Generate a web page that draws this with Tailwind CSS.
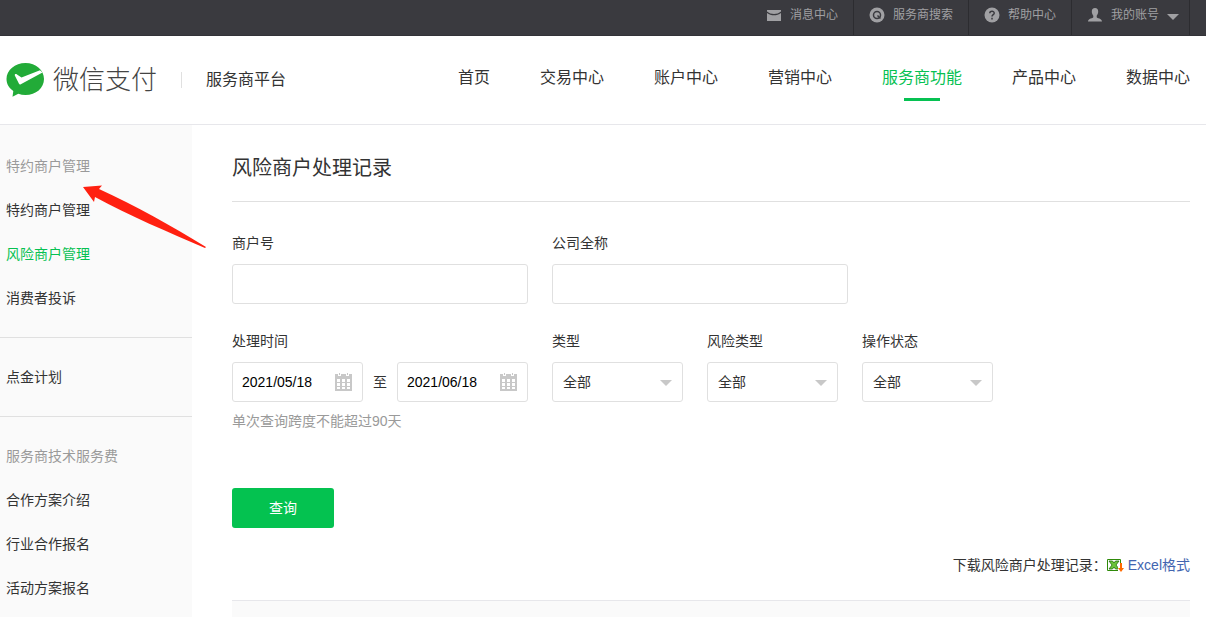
<!DOCTYPE html>
<html lang="zh-CN">
<head>
<meta charset="utf-8">
<title>微信支付服务商平台</title>
<script src="https://cdn.jsdelivr.net/npm/@tailwindcss/browser@4"></script>
</head>
<body class="flex min-h-screen flex-col bg-white font-['Liberation_Sans','Noto_Sans_CJK_SC',sans-serif] text-sm text-[#333]">
<div class="flex h-9 justify-end border-b border-[#333338] bg-[#3a3a3f] pr-4 text-xs text-[#a0a0a3]">
  <a href="#" class="flex items-center gap-2 border-r border-[#2c2c30] px-[15px] pb-1.5">
    <svg class="h-4 w-4" viewBox="0 0 16 16" fill="#a0a0a3"><path d="M1 3h14v1.500C13 6.200 10.500 7 8 7S3 6.200 1 4.500z"/><path d="M1 6c2 1.500 4.500 2.300 7 2.300S13 7.500 15 6v8H1z"/></svg>
    消息中心</a>
  <a href="#" class="flex items-center gap-2 border-r border-[#2c2c30] px-[15px] pb-1.5">
    <svg class="h-4 w-4" viewBox="0 0 16 16"><circle cx="8" cy="8" r="7.500" fill="#a0a0a3"/><circle cx="8" cy="8" r="3.500" fill="none" stroke="#3a3a3f" stroke-width="1.500"/><path d="M8.500 8.500l3 3" stroke="#3a3a3f" stroke-width="1.500"/></svg>
    服务商搜索</a>
  <a href="#" class="flex items-center gap-2 border-r border-[#2c2c30] px-[15px] pb-1.5">
    <svg class="h-4 w-4" viewBox="0 0 16 16"><circle cx="8" cy="8" r="7.500" fill="#a0a0a3"/><path d="M5.800 6.300C5.800 3.600 10.300 3.700 10.200 6.200 10.200 7.700 8 7.700 8 9.600M8 10.800v1.700" fill="none" stroke="#3a3a3f" stroke-width="1.500"/></svg>
    帮助中心</a>
  <a href="#" class="flex items-center gap-2 border-r border-[#2c2c30] pr-2.5 pl-[15px] pb-1.5">
    <svg class="h-4 w-4" viewBox="0 0 16 16" fill="#a0a0a3"><path d="M8 1c2.200 0 3.200 1.500 3.200 3.500S10.300 8 9.700 8.700v1.500c0 1 5.300 1 5.300 4.300H1c0-3.300 5.300-3.300 5.300-4.300V8.700C5.700 8 4.800 6.500 4.800 4.500S5.800 1 8 1z"/></svg>
    我的账号
    <svg class="mt-1 h-1.5 w-3" viewBox="0 0 12 6" fill="#a0a0a3"><path d="M0 0h12L6 6z"/></svg></a>
</div>

<header class="flex h-[89px] items-center justify-between border-b border-[#e7e7eb] pr-4 pl-1.5">
  <div class="flex items-center">
    <a href="#" class="flex items-center gap-2 font-['Noto_Sans_CJK_SC',sans-serif] text-[26px] font-light text-[#444]">
      <svg class="h-9 w-[39px]" viewBox="0 0 39 36"><path d="M19.500 1C30 1 38 8 38 17s-8 16-18.500 16c-2.600 0-5-.4-7.200-1.200L6.500 34.800 7.300 29C3 26 .5 22 .5 17 .5 8 9 1 19.500 1z" fill="#22ab38"/><path d="M8.800 13.500C8.500 12 10 11.800 11 12.500L15.500 15.500 34 8.300 36.500 10.500 14.800 22.300C14 22.700 13.300 22.500 13 21.800z" fill="#fff"/></svg>
      <span class="pb-1">微信支付</span></a>
    <span class="ml-6 h-4 w-px bg-[#e0e0e0]"></span>
    <span class="ml-6 text-base">服务商平台</span>
  </div>
  <nav class="flex gap-[50px] pb-1 text-base">
    <a href="#">首页</a>
    <a href="#">交易中心</a>
    <a href="#">账户中心</a>
    <a href="#">营销中心</a>
    <a href="#" class="relative text-[#06c152]">服务商功能<span class="absolute top-8 left-1/2 h-[3px] w-9 -translate-x-1/2 bg-[#06c152]"></span></a>
    <a href="#">产品中心</a>
    <a href="#">数据中心</a>
  </nav>
</header>

<div class="relative flex grow">
  <aside class="w-48 shrink-0 bg-[#fafafa] pt-[31px]">
    <h2 class="mb-6 pl-1.5 leading-5 text-[#9a9a9a]">特约商户管理</h2>
    <ul class="flex flex-col gap-6 pl-1.5 leading-5">
      <li><a href="#">特约商户管理</a></li>
      <li><a href="#" class="text-[#06c152]">风险商户管理</a></li>
      <li><a href="#">消费者投诉</a></li>
    </ul>
    <div class="my-[29px] border-y border-[#e0e0e0] py-[29px] pl-1.5 leading-5"><a href="#">点金计划</a></div>
    <h2 class="mb-6 pl-1.5 leading-5 text-[#9a9a9a]">服务商技术服务费</h2>
    <ul class="flex flex-col gap-6 pl-1.5 leading-5">
      <li><a href="#">合作方案介绍</a></li>
      <li><a href="#">行业合作报名</a></li>
      <li><a href="#">活动方案报名</a></li>
    </ul>
  </aside>

  <main class="flex grow flex-col pr-4 pl-10">
    <h1 class="border-b border-[#e0e0e0] pt-[29px] pb-[19px] text-xl">风险商户处理记录</h1>
    <form class="pt-[31px]">
      <div class="flex gap-6">
        <div class="flex w-[296px] flex-col gap-[11px]"><label for="mch" class="leading-5">商户号</label><input id="mch" type="text" class="h-10 rounded-[3px] border border-[#e0e0e0] px-2.5"></div>
        <div class="flex w-[296px] flex-col gap-[11px]"><label for="company" class="leading-5">公司全称</label><input id="company" type="text" class="h-10 rounded-[3px] border border-[#e0e0e0] px-2.5"></div>
      </div>
      <div class="flex gap-6 pt-[27px]">
        <div class="flex flex-col">
          <label for="from" class="mb-[11px] leading-5">处理时间</label>
          <div class="flex items-center gap-2.5">
            <div class="flex h-10 w-[131px] items-center justify-between rounded-[3px] border border-[#e0e0e0] pr-2.5 pl-[9px] text-black">
              <input id="from" type="text" value="2021/05/18" class="w-20">
              <svg class="h-[18px] w-[17px] shrink-0" viewBox="0 0 17 18"><path d="M0 1h3v2h3V1h5v2h3V1h3v17H0zM4 0h1v2H4zM12 0h1v2h-1z" fill="#c8c8c8"/><path d="M2 6h3v3H2zM7 6h3v3H7zM12 6h3v3h-3zM2 10h3v3H2zM7 10h3v3H7zM12 10h3v3h-3zM2 14h3v2H2zM7 14h3v2H7zM12 14h3v2h-3z" fill="#fff"/></svg>
            </div>
            <label for="to">至</label>
            <div class="flex h-10 w-[131px] items-center justify-between rounded-[3px] border border-[#e0e0e0] pr-2.5 pl-[9px] text-black">
              <input id="to" type="text" value="2021/06/18" class="w-20">
              <svg class="h-[18px] w-[17px] shrink-0" viewBox="0 0 17 18"><path d="M0 1h3v2h3V1h5v2h3V1h3v17H0zM4 0h1v2H4zM12 0h1v2h-1z" fill="#c8c8c8"/><path d="M2 6h3v3H2zM7 6h3v3H7zM12 6h3v3h-3zM2 10h3v3H2zM7 10h3v3H7zM12 10h3v3h-3zM2 14h3v2H2zM7 14h3v2H7zM12 14h3v2h-3z" fill="#fff"/></svg>
            </div>
          </div>
          <p class="mt-[9px] leading-5 text-[#9a9a9a]">单次查询跨度不能超过90天</p>
        </div>
        <div class="flex flex-col gap-[11px]"><label for="type" class="leading-5">类型</label>
          <div class="relative"><select id="type" class="h-10 w-[131px] appearance-none rounded-[3px] border border-[#e0e0e0] px-2.5"><option>全部</option></select><svg class="pointer-events-none absolute top-[18px] right-[11px] h-1.5 w-3" viewBox="0 0 12 6"><path d="M0 0h12L6 6z" fill="#c8c8c8"/></svg></div></div>
        <div class="flex flex-col gap-[11px]"><label for="risk" class="leading-5">风险类型</label>
          <div class="relative"><select id="risk" class="h-10 w-[131px] appearance-none rounded-[3px] border border-[#e0e0e0] px-2.5"><option>全部</option></select><svg class="pointer-events-none absolute top-[18px] right-[11px] h-1.5 w-3" viewBox="0 0 12 6"><path d="M0 0h12L6 6z" fill="#c8c8c8"/></svg></div></div>
        <div class="flex flex-col gap-[11px]"><label for="state" class="leading-5">操作状态</label>
          <div class="relative"><select id="state" class="h-10 w-[131px] appearance-none rounded-[3px] border border-[#e0e0e0] px-2.5"><option>全部</option></select><svg class="pointer-events-none absolute top-[18px] right-[11px] h-1.5 w-3" viewBox="0 0 12 6"><path d="M0 0h12L6 6z" fill="#c8c8c8"/></svg></div></div>
      </div>
      <button type="submit" class="mt-[57px] h-10 w-[102px] rounded-[3px] bg-[#04c250] text-white">查询</button>
    </form>
    <div class="mt-[27px] flex items-center justify-end leading-5">
      下载风险商户处理记录：
      <a href="#" class="flex items-center gap-1 text-[#4265b0]">
        <svg class="h-4 w-[17px]" viewBox="0 0 17 16"><path d="M.5 2.500h13v11H.5z" fill="#fff" stroke="#2f8a0a"/><path d="M2 4h3.500L7 6l1.500-2H12L9 8l3 4H8.500L7 10l-1.500 2H2l3-4z" fill="#6cc33a" stroke="#22700a" stroke-width=".8"/><path d="M11 9h6v6h-6z" fill="#fff"/><path d="M13 6h2v5h2l-3 4-3-4h2z" fill="#ff6a00"/></svg>
        Excel格式</a>
    </div>
    <div class="mt-[25px] grow border-t border-[#e7e7eb] bg-[#fafafa]"></div>
  </main>

  <svg class="pointer-events-none absolute top-[60px] left-[82px] h-[64px] w-[126px]" viewBox="82 185 126 64"><path d="M83 187L102 185.500 99 189C136 206 172 226 206 247L205 248C168 232 130 216 95 197L94 202z" fill="#ff2010"/></svg>
</div>
</body>
</html>
